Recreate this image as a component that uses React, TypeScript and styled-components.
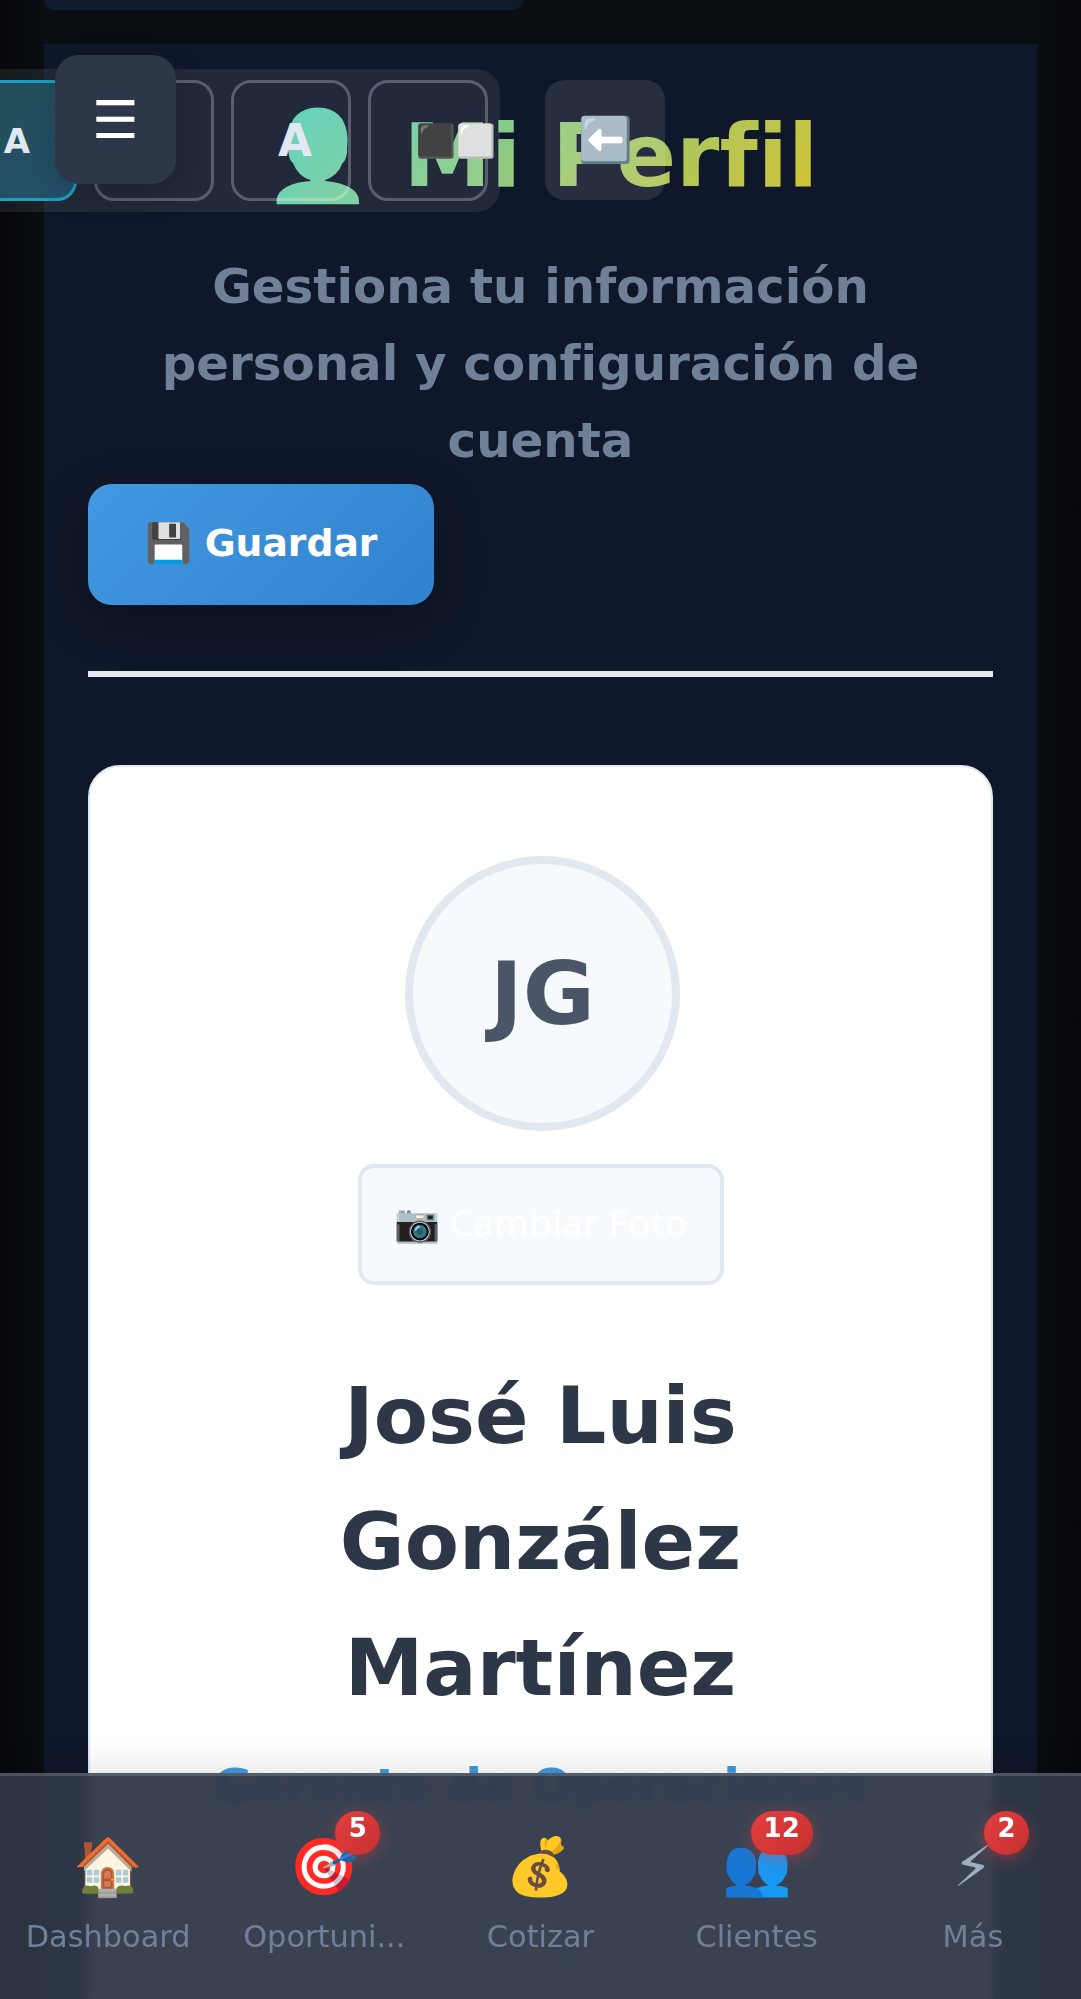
import React from "react"
import styled, { createGlobalStyle } from "styled-components"

const Global = createGlobalStyle`
  html, body {
    margin: 0;
    padding: 0;
    height: 1999px;
    overflow: hidden;
    background: #0a0d12;
  }
  * {
    box-sizing: border-box;
  }
  #root {
    font-family: "DejaVu Sans", sans-serif;
    font-variant-ligatures: none;
  }
`

const Page = styled.div`
  position: relative;
  width: 1081px;
  height: 1999px;
  overflow: hidden;
  padding: 0 44px;
  background: linear-gradient(90deg, #05070b 0, #0a0d12 45px, #0a0d12 1036px, #05070b 100%);
`

const TopStub = styled.div`
  width: 479px;
  height: 10px;
  background: #111a2c;
  border-radius: 0 0 16px 16px;
`

const Main = styled.main`
  margin-top: 34px;
  height: 1955px;
  padding: 46px 44px 0;
  background: #0f172a;
  overflow: hidden;
`

const Title = styled.h1`
  width: fit-content;
  margin: 0 auto;
  height: 132px;
  font-size: 88px;
  line-height: 132px;
  font-weight: 700;
  text-align: center;
  color: transparent;
  background: linear-gradient(135deg, #4fd1c5, #d9c22e);
  -webkit-background-clip: text;
  background-clip: text;
`

const Subtitle = styled.p`
  margin: 26px 0 0;
  padding: 0 20px;
  font-size: 48.3px;
  line-height: 77px;
  font-weight: 700;
  text-align: center;
  color: #718096;
`

const SaveButton = styled.button`
  display: block;
  width: 346px;
  height: 121px;
  margin-top: 5px;
  padding: 0 0 4px;
  border: none;
  border-radius: 24px;
  font-family: inherit;
  font-variant-ligatures: none;
  font-size: 37.7px;
  font-weight: 700;
  color: #fff;
  background: linear-gradient(135deg, #4299e1, #3182ce);
  box-shadow: 0 16px 48px rgba(0, 0, 0, 0.3);
`

const Divider = styled.hr`
  margin: 66px 0 0;
  height: 6px;
  border: none;
  background: #e2e8f0;
`

const Card = styled.section`
  margin-top: 88px;
  height: 1400px;
  padding: 89px 0 0;
  background: #fff;
  border: 2px solid #e2e8f0;
  border-radius: 32px;
  text-align: center;
`

const Avatar = styled.div`
  display: flex;
  align-items: center;
  justify-content: center;
  width: 275px;
  height: 275px;
  margin: 0 0 0 315px;
  border: 8px solid #e2e8f0;
  border-radius: 50%;
  background: #f7fafc;
  font-size: 88px;
  font-weight: 700;
  color: #4a5568;
`

const PhotoButton = styled.button`
  display: block;
  width: 366px;
  height: 121px;
  margin: 33px auto 0;
  padding: 0 0 6px;
  border: 4px solid #e2e8f0;
  border-radius: 16px;
  background: #f7fafc;
  font-family: "Noto Sans", sans-serif;
  font-size: 37px;
  font-weight: 500;
  color: #fff;
`

const Name = styled.h2`
  margin: 68px auto 0;
  width: 600px;
  font-size: 79px;
  line-height: 126px;
  font-weight: 700;
  color: #2d3748;
`

const Role = styled.div`
  margin-top: 19px;
  font-size: 48px;
  line-height: 72px;
  font-weight: 700;
  color: #4299e1;
`

const Associates = styled.div`
  margin-top: 106px;
  font-size: 40px;
  color: #a0aec0;
`

const ToolPanel = styled.div`
  position: absolute;
  top: 69px;
  left: -59px;
  display: flex;
  gap: 17px;
  width: 559px;
  height: 143px;
  padding: 11px 16px;
  background: rgba(255, 255, 255, 0.08);
  border-radius: 24px;
`

const ToolButton = styled.button<{ $active?: boolean; $size: number; $inset?: number }>`
  display: flex;
  flex: none;
  align-items: center;
  justify-content: center;
  width: 120px;
  height: 121px;
  padding: 0 0 0 ${(p) => p.$inset ?? 0}px;
  border: 3px solid ${(p) => (p.$active ? "#1c9fc0" : "rgba(255, 255, 255, 0.25)")};
  border-radius: 20px;
  font-family: inherit;
  font-size: ${(p) => p.$size}px;
  font-weight: 700;
  color: #e2e8f0;
  background: ${(p) => (p.$active ? "linear-gradient(135deg, #234e52, #24506e)" : "transparent")};
`

const ThemeButton = styled(ToolButton)`
  justify-content: flex-start;
  padding-left: 45px;
  white-space: nowrap;
`

const MenuButton = styled.button`
  position: absolute;
  top: 55px;
  left: 55px;
  width: 121px;
  height: 129px;
  padding: 0;
  border: none;
  border-radius: 24px;
  background: #2d3748;
  box-shadow: 0 8px 32px rgba(0, 0, 0, 0.2);
  font-family: inherit;
  font-size: 52px;
  color: #fff;
`

const BackButton = styled.button`
  position: absolute;
  top: 80px;
  left: 545px;
  width: 120px;
  height: 120px;
  padding: 0;
  border: none;
  border-radius: 20px;
  background: rgba(255, 255, 255, 0.1);
  font-family: inherit;
  font-size: 44px;
  color: #fff;
`

const BackGlyph = styled.span`
  filter: saturate(0.5) brightness(1.1);
`

const BottomNav = styled.nav`
  position: absolute;
  left: 0;
  right: 0;
  bottom: 0;
  display: grid;
  grid-template-columns: repeat(5, 1fr);
  height: 226px;
  padding-top: 55px;
  background: rgba(47, 56, 73, 0.95);
  border-top: 3px solid rgba(255, 255, 255, 0.15);
  backdrop-filter: blur(5px);
  box-shadow: 0 -8px 32px rgba(0, 0, 0, 0.1);
`

const NavItem = styled.div`
  position: relative;
  display: flex;
  flex-direction: column;
  align-items: center;
  min-width: 0;
`

const NavIcon = styled.div`
  height: 72px;
  font-size: 56px;
  line-height: 72px;
  color: #a0aec0;
`

const Badge = styled.span`
  position: absolute;
  top: -20px;
  right: 52px;
  min-width: 45px;
  height: 44px;
  padding: 0 13px;
  border-radius: 23px;
  background: linear-gradient(135deg, #e53e3e, #c53030);
  box-shadow: 0 4px 16px rgba(229, 62, 62, 0.4);
  font-size: 26px;
  line-height: 35px;
  font-weight: 700;
  text-align: center;
  color: #fff;
`

const NavLabel = styled.span`
  margin-top: 14px;
  font-size: 30.4px;
  line-height: 40px;
  color: #718096;
`

const navItems = [
  { icon: "🏠", label: "Dashboard" },
  { icon: "🎯", label: "Oportuni...", badge: 5 },
  { icon: "💰", label: "Cotizar" },
  { icon: "👥", label: "Clientes", badge: 12 },
  { icon: "⚡", label: "Más", badge: 2 },
]

const App: React.FC = () => {
  return (
    <Page>
      <Global />
      <TopStub />
      <Main>
        <Title>👤 Mi Perfil</Title>
        <Subtitle>Gestiona tu información personal y configuración de cuenta</Subtitle>
        <SaveButton>💾 Guardar</SaveButton>
        <Divider />
        <Card>
          <Avatar>JG</Avatar>
          <PhotoButton>📷 Cambiar Foto</PhotoButton>
          <Name>José Luis González Martínez</Name>
          <Role>Gerente de Operaciones</Role>
          <Associates>Asociados</Associates>
        </Card>
      </Main>
      <ToolPanel>
        <ToolButton $active $size={34}>A</ToolButton>
        <ToolButton $size={38}>A</ToolButton>
        <ToolButton $size={44} $inset={8}>A</ToolButton>
        <ThemeButton $size={32}>⬛⬜</ThemeButton>
      </ToolPanel>
      <MenuButton>☰</MenuButton>
      <BackButton><BackGlyph>⬅️</BackGlyph></BackButton>
      <BottomNav>
        {navItems.map((item) => (
          <NavItem key={item.label}>
            <NavIcon>{item.icon}</NavIcon>
            {item.badge && <Badge>{item.badge}</Badge>}
            <NavLabel>{item.label}</NavLabel>
          </NavItem>
        ))}
      </BottomNav>
    </Page>
  )
}

export default App
